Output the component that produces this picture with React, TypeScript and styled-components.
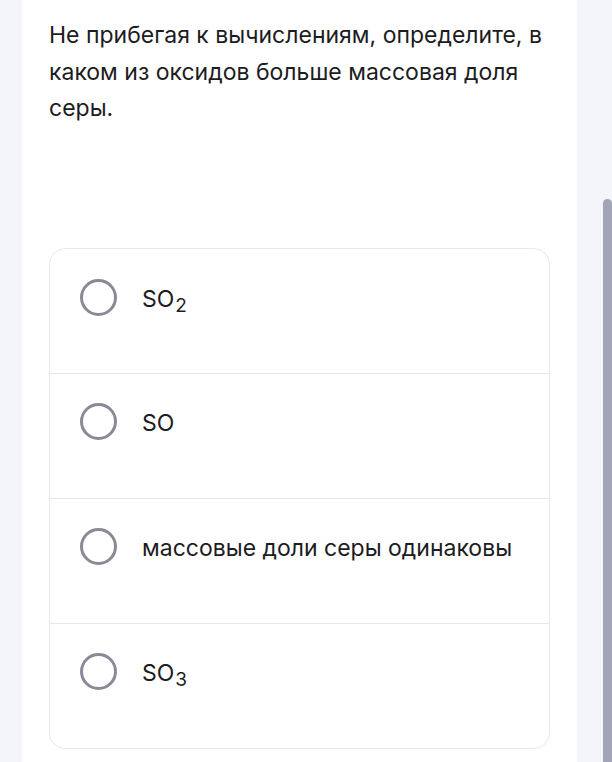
import React from "react";
import styled, { createGlobalStyle } from "styled-components";

const Global = createGlobalStyle`
  html, body { margin: 0; padding: 0; }
  body {
    background: #f4f4fb;
    font-family: Inter, "Noto Sans", "Liberation Sans", sans-serif;
    overflow: hidden;
  }
`;

const Page = styled.div`
  position: relative;
  height: 762px;
  overflow: hidden;
  padding-left: 22px;
`;

const Card = styled.div`
  width: 555px;
  height: 100%;
  box-sizing: border-box;
  background: #ffffff;
  padding: 17px 27px 0 27px;
`;

const Question = styled.p`
  margin: 0;
  width: 501px;
  font-size: 23px;
  line-height: 36.5px;
  color: #1c1c22;
`;

const Options = styled.div`
  margin-top: 121px;
  width: 501px;
  box-sizing: border-box;
  border: 1px solid #e7e7ed;
  border-radius: 16px;
  overflow: hidden;
`;

const Row = styled.label<{ $first?: boolean }>`
  display: flex;
  align-items: flex-start;
  height: ${(p) => (p.$first ? "124px" : "125px")};
  box-sizing: border-box;
  padding: ${(p) => (p.$first ? "30px" : "29px")} 30px 0 30px;
  border-top: ${(p) => (p.$first ? "none" : "1px solid #e7e7ed")};
  cursor: pointer;
`;

const RowInner = styled.span`
  display: flex;
  align-items: center;
  gap: 25px;
`;

const Radio = styled.span`
  flex: none;
  width: 37px;
  height: 37px;
  box-sizing: border-box;
  border: 3px solid #8a8995;
  border-radius: 50%;
`;

const Label = styled.span`
  font-size: 23px;
  line-height: 28px;
  color: #1c1c22;
  position: relative;
  top: 2px;
`;

const Sub = styled.sub`
  font-size: 19px;
  line-height: 0;
  vertical-align: -5px;
  margin-left: 1px;
`;

const Scrollbar = styled.div`
  position: absolute;
  right: 0;
  top: 199px;
  bottom: 0;
  width: 9px;
  background: #a2a5b7;
  border-radius: 5px 5px 0 0;
`;

const options: { text: string; sub?: string }[] = [
  { text: "SO", sub: "2" },
  { text: "SO" },
  { text: "массовые доли серы одинаковы" },
  { text: "SO", sub: "3" },
];

export default function App() {
  return (
    <>
      <Global />
      <Page>
        <Card>
          <Question>
            Не прибегая к вычислениям, определите, в каком из оксидов больше массовая доля серы.
          </Question>
          <Options>
            {options.map((o, i) => (
              <Row key={i} $first={i === 0}>
                <RowInner>
                  <Radio />
                  <Label>
                    {o.text}
                    {o.sub && <Sub>{o.sub}</Sub>}
                  </Label>
                </RowInner>
              </Row>
            ))}
          </Options>
        </Card>
        <Scrollbar />
      </Page>
    </>
  );
}
